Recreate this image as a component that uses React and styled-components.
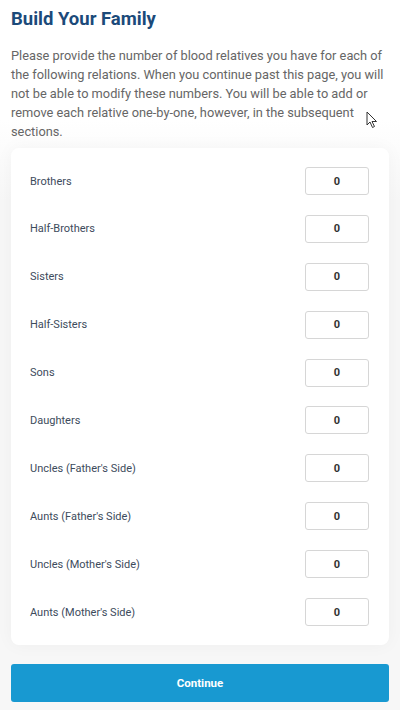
import React, { useState } from 'react'
import styled, { createGlobalStyle } from 'styled-components'

const GlobalStyle = createGlobalStyle`
  html, body {
    margin: 0;
    padding: 0;
    background: #fff;
    font-family: Roboto, "Liberation Sans", Arial, sans-serif;
  }
`

const Page = styled.div`
  position: relative;
  width: 400px;
  min-height: 710px;
  box-sizing: border-box;
  padding: 7px 11px 8px 11px;
  background: linear-gradient(to bottom, #fff 0px, #fff 120px, #f7f7f7 200px, #f7f7f7 100%);
`

const Title = styled.h1`
  margin: 0 0 14.5px 0;
  font-size: 18.5px;
  line-height: 24px;
  font-weight: 700;
  color: #1b4a7a;
`

const Intro = styled.p`
  margin: 0 0 7.5px 0;
  font-size: 12.8px;
  line-height: 19px;
  color: #666;
`

const Card = styled.div`
  background: #fff;
  border-radius: 8px;
  padding: 19px 20px 19px 19px;
  box-shadow: 0 0 18px rgba(0, 0, 0, 0.04);
  display: flex;
  flex-direction: column;
  gap: 19.9px;
`

const Row = styled.div`
  display: flex;
  align-items: center;
  justify-content: space-between;
  height: 28px;
`

const Label = styled.label`
  font-size: 11px;
  color: #3d4b5c;
`

const CountInput = styled.input`
  width: 64px;
  height: 28px;
  box-sizing: border-box;
  border: 1px solid #d6d6d6;
  border-radius: 3px;
  background: #fff;
  text-align: center;
  font-family: inherit;
  font-size: 11px;
  font-weight: 700;
  color: #333;
  outline: none;
`

const ContinueButton = styled.button`
  display: block;
  width: 100%;
  height: 38px;
  margin-top: 19px;
  border: none;
  border-radius: 3px;
  background: #1899d1;
  color: #fff;
  font-family: inherit;
  font-size: 11.5px;
  font-weight: 700;
  cursor: pointer;
`

const Pointer = styled.svg`
  position: absolute;
  left: 366px;
  top: 111px;
`

const relations = [
  'Brothers',
  'Half-Brothers',
  'Sisters',
  'Half-Sisters',
  'Sons',
  'Daughters',
  "Uncles (Father's Side)",
  "Aunts (Father's Side)",
  "Uncles (Mother's Side)",
  "Aunts (Mother's Side)",
]

export default function App() {
  const [counts, setCounts] = useState(relations.map(() => 0))

  const update = (i, v) => {
    const next = counts.slice()
    next[i] = v
    setCounts(next)
  }

  return (
    <Page>
      <GlobalStyle />
      <Title>Build Your Family</Title>
      <Intro>
        Please provide the number of blood relatives you have for each of the following relations. When you continue past
        this page, you will not be able to modify these numbers. You will be able to add or remove each relative
        one-by-one, however, in the subsequent sections.
      </Intro>
      <Card>
        {relations.map((r, i) => (
          <Row key={r}>
            <Label>{r}</Label>
            <CountInput value={counts[i]} onChange={e => update(i, e.target.value)} />
          </Row>
        ))}
      </Card>
      <ContinueButton>Continue</ContinueButton>
      <Pointer width="12" height="18" viewBox="0 0 12 18">
        <path d="M1 1 L1 14 L4 11 L6.5 16.5 L8.5 15.5 L6 10.5 L10.5 10.5 Z" fill="#fff" stroke="#333" strokeWidth="1" strokeLinejoin="round" />
      </Pointer>
    </Page>
  )
}
